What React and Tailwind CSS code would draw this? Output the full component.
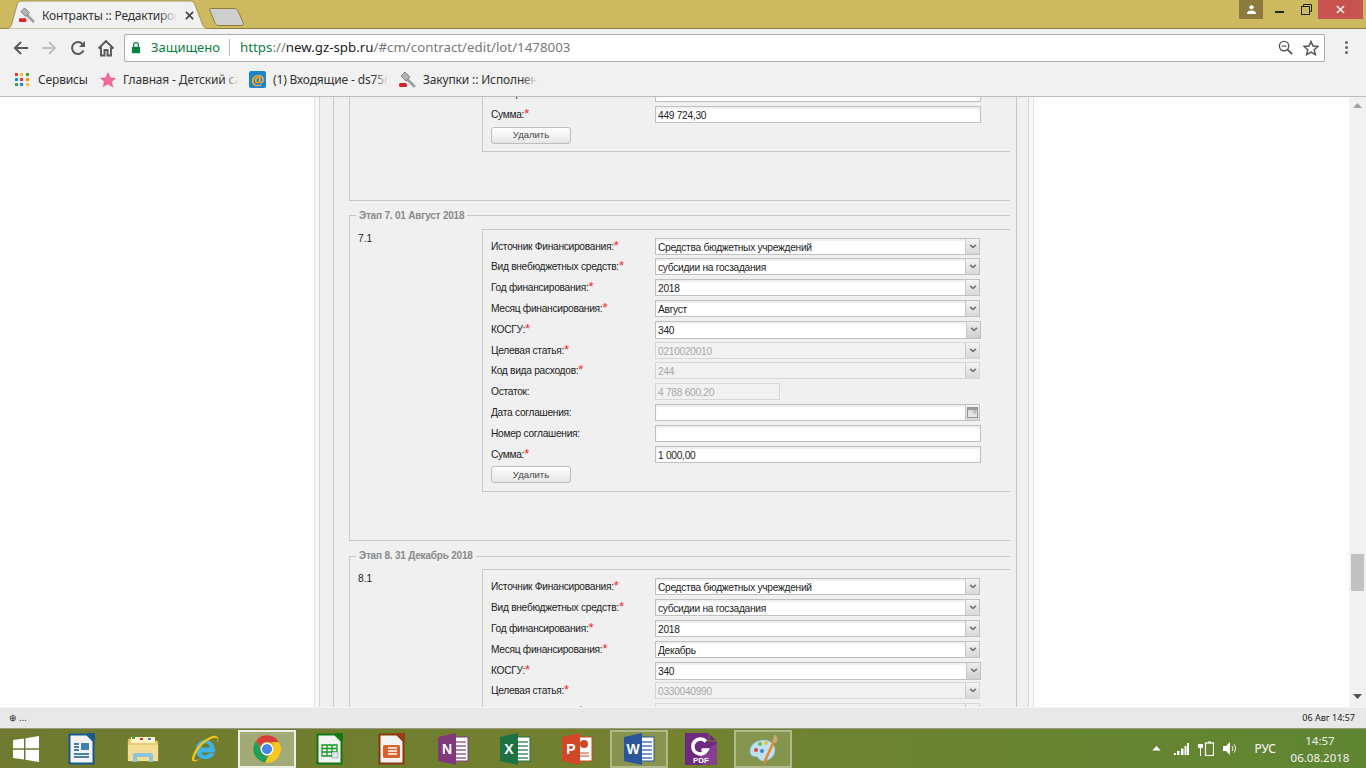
import React from "react";

const UI = { fontFamily: '"Noto Sans", "Open Sans", sans-serif' };

function Gavel({ className }) {
  return (
    <svg viewBox="0 0 18 18" className={className}>
      <path d="M8 7l8 8" stroke="#a0a0a0" strokeWidth="3" strokeLinecap="round" />
      <path d="M3 5l4-4 5 5-4 4z" fill="#b4b4b4" stroke="#707070" strokeWidth="0.8" />
      <rect x="1" y="12" width="8" height="4" rx="1.5" fill="#d8232a" />
    </svg>
  );
}

function Chevron() {
  return (
    <svg viewBox="0 0 9 6" className="w-[8px] h-[5px]">
      <path d="M1 1l3.5 3L8 1" fill="none" stroke="#6f7680" strokeWidth="2" />
    </svg>
  );
}

function Trigger({ dark, children }) {
  return (
    <div className={`flex items-center justify-center h-full border-l border-[#c8c8c8] bg-linear-to-b w-[14px] shrink-0 ${dark ? "from-[#ececec] to-[#cfcfcf]" : "from-[#f4f4f4] to-[#d8d8d8]"}`}>
      {children || <Chevron />}
    </div>
  );
}

function Field({ value, kind = "select", disabled, wide, short }) {
  const width = short ? "w-[125px]" : kind === "text" || wide ? "w-[326px]" : "w-[325px]";
  const height = wide ? "h-[18px]" : "h-[17px]";
  return (
    <div
      className={`flex items-stretch border ${height} ${width} ${disabled ? "border-[#d6d6d6] bg-[#f1f1f1] text-[#a8a8a8]" : "border-[#c0c0c0] bg-white text-[#222] shadow-[inset_0_2px_2px_rgba(0,0,0,0.07)]"}`}
    >
      <div className="flex-1 pl-[2px] leading-[17px] tracking-[-0.28px] overflow-hidden whitespace-nowrap">{value}</div>
      {kind === "select" && <Trigger dark={wide} />}
      {kind === "date" && (
        <Trigger>
          <svg viewBox="0 0 12 12" className="w-[11px] h-[11px]">
            <rect x="0.5" y="0.5" width="11" height="11" fill="#e2e2e2" stroke="#8e8e8e" />
            <rect x="1" y="1" width="10" height="2.5" fill="#9a9a9a" />
            <circle cx="8.5" cy="5.5" r="1.4" fill="#fff" stroke="#777" strokeWidth="0.7" />
          </svg>
        </Trigger>
      )}
    </div>
  );
}

function Row({ label, req, ...f }) {
  return (
    <div className="flex items-start h-[20.8px]">
      <div className="w-[164px] pt-[1px] leading-[16px] tracking-[-0.28px] text-[#222] whitespace-nowrap">
        {label}
        {req && <span className="text-[#f22] text-[13px] leading-[12px]">*</span>}
      </div>
      <Field {...f} />
    </div>
  );
}

function Remove() {
  return (
    <button className="block w-[80px] h-[17px] border border-[#bdbdbd] rounded-[3px] bg-linear-to-b from-[#ffffff] to-[#e6e6e6] text-[9.5px] leading-[14px] text-[#444]">
      Удалить
    </button>
  );
}

function Stage({ title, num, target, month, kbk, last }) {
  return (
    <fieldset className="border border-r-0 border-[#c8c8c8] mb-[9px] pt-[7px] pb-[48px] min-w-0">
      <legend className="ml-[6px] px-[3px] text-[10px] tracking-[-0.2px] leading-[12px] font-bold text-[#8a8a8a]">{title}</legend>
      <div className="flex pl-[8px]">
        <div className="w-[124px] pt-[3px] text-[#222] leading-[13px]">{num}</div>
        <div className="flex-1 border border-r-0 border-[#c8c8c8] pl-[8px] pt-[8px] pb-[8px]">
          <Row label="Источник Финансирования:" req value="Средства бюджетных учреждений" />
          <Row label="Вид внебюджетных средств:" req value="субсидии на госзадания" />
          <Row label="Год финансирования:" req value="2018" />
          <Row label="Месяц финансирования:" req value={month} />
          <Row label="КОСГУ:" req value="340" wide />
          <Row label="Целевая статья:" req value={target} disabled />
          <Row label="Код вида расходов:" req value={kbk} disabled />
          {!last && (
            <>
              <Row label="Остаток:" value="4 788 600,20" kind="none" disabled short />
              <Row label="Дата соглашения:" value="" kind="date" />
              <Row label="Номер соглашения:" value="" kind="text" />
              <Row label="Сумма:" req value="1 000,00" kind="text" />
              <Remove />
            </>
          )}
        </div>
      </div>
    </fieldset>
  );
}

function TitleBar() {
  return (
    <div className="relative h-[29px] shrink-0 bg-[#cdb95f] border-b border-[#8f7f3c] flex">
      <div className="relative w-[211px] h-[29px] shrink-0 flex items-start pt-[7px] pl-[18px]">
        <svg viewBox="0 0 211 29" className="absolute inset-0 w-[211px] h-[29px]">
          <path d="M0 28.5H7C10 28.5 11 26 12 23L17 5C18 2 19 1 22 1H190C193 1 194 2 195 5L202 23C203 26 204 28.5 208 28.500H211V29H0z" fill="#f1f1f1" stroke="#94843f" strokeWidth="0.8" />
        </svg>
        <Gavel className="relative w-[17px] h-[17px] shrink-0" />
        <div className="relative ml-[7px] w-[135px] overflow-hidden whitespace-nowrap text-[12px] tracking-[-0.2px] leading-[18px] text-[#333]" style={UI}>
          Контракты :: Редактирование
          <div className="absolute right-0 top-0 w-[18px] h-full bg-linear-to-r from-transparent to-[#f1f1f1]" />
        </div>
        <svg viewBox="0 0 10 10" className="relative ml-[8px] mt-[4px] w-[9px] h-[9px] shrink-0">
          <path d="M1 1l8 8M9 1l-8 8" stroke="#444" strokeWidth="1.8" />
        </svg>
      </div>
      <svg viewBox="0 0 36 20" className="w-[36px] h-[20px] mt-[7px] -ml-[2px]">
        <path d="M1.500 1.500H25C27 1.500 28 2 29 4L34 15C35 17.500 34 18.500 32 18.500H10C8 18.500 7 18 6 16L1 3.500C0.600 2 0.800 1.500 1.500 1.500z" fill="#cfcfcf" stroke="#8d7e3e" />
      </svg>
      <div className="ml-auto flex items-start pr-[3px]">
        <div className="w-[24px] h-[19px] bg-[#8c7a3f] flex items-center justify-center">
          <svg viewBox="0 0 12 10" className="w-[11px] h-[9px]"><circle cx="6" cy="2.600" r="2.400" fill="#fff" /><path d="M1 10c0-3 2-4 5-4s5 1 5 4z" fill="#fff" /></svg>
        </div>
        <div className="w-[29px] h-[19px] flex items-center justify-center ml-[2px]"><div className="w-[9px] h-[2px] bg-[#222] mt-[4px]" /></div>
        <div className="w-[24px] h-[19px] flex items-center justify-center">
          <svg viewBox="0 0 11 11" className="w-[11px] h-[11px]"><path d="M2.500 2.500V.5h8v7h-2" fill="none" stroke="#222" /><rect x="0.5" y="2.500" width="8" height="8" fill="none" stroke="#222" strokeWidth="1" /></svg>
        </div>
        <div className="w-[45px] h-[19px] bg-[#c85250] flex items-center justify-center">
          <svg viewBox="0 0 10 10" className="w-[9px] h-[9px]"><path d="M1 1l8 8M9 1l-8 8" stroke="#fff" strokeWidth="1.500" /></svg>
        </div>
      </div>
    </div>
  );
}

function Toolbar() {
  return (
    <div className="h-[33px] shrink-0 bg-[#f1f1f1] flex items-center pt-[4px]" style={UI}>
      <div className="w-[124px] flex items-center shrink-0 pl-[13px] gap-[12px]">
        <svg viewBox="0 0 16 16" className="w-[16px] h-[16px]"><path d="M15 8H2M8 2L2 8l6 6" fill="none" stroke="#5a5a5a" strokeWidth="2" /></svg>
        <svg viewBox="0 0 16 16" className="w-[16px] h-[16px]"><path d="M1 8h13M8 2l6 6-6 6" fill="none" stroke="#c0c0c0" strokeWidth="2" /></svg>
        <svg viewBox="0 0 16 16" className="w-[16px] h-[16px] translate-x-[1px]"><path d="M13.500 10.500A6 6 0 1 1 12.500 4" fill="none" stroke="#5a5a5a" strokeWidth="2" /><path d="M15 1v6H9z" fill="#5a5a5a" /></svg>
        <svg viewBox="0 0 18 18" className="w-[18px] h-[18px]"><path d="M1.500 9.500L9 2l7.500 7.500M4 8v8.500h3.500V11h3v5.500H14V8" fill="none" stroke="#5a5a5a" strokeWidth="1.900" /></svg>
      </div>
      <div className="w-[1201px] h-[28px] bg-white border border-[#aaaaaa] rounded-[2px] flex items-center pl-[6px] pr-[5px]">
        <svg viewBox="0 0 12 14" className="w-[10px] h-[13px] shrink-0"><rect x="1" y="6" width="10" height="8" rx="1" fill="#0b8043" /><path d="M3.200 6V4a2.800 2.800 0 0 1 5.600 0v2" fill="none" stroke="#0b8043" strokeWidth="1.500" /></svg>
        <span className="ml-[10px] text-[13px] text-[#0b8043]">Защищено</span>
        <div className="ml-[9px] w-px h-[17px] bg-[#bdbdbd]" />
        <span className="ml-[10px] text-[13.3px] leading-[20px] -mt-[2px] text-[#777] whitespace-nowrap">
          <span className="text-[#0b8043]">https</span>://<span className="text-[#222]">new.gz-spb.ru</span>/#cm/contract/edit/lot/1478003
        </span>
        <svg viewBox="0 0 16 16" className="ml-auto w-[15px] h-[15px]"><circle cx="6.500" cy="6.500" r="5" fill="none" stroke="#555" strokeWidth="1.500" /><path d="M4 6.500h5" stroke="#555" strokeWidth="1.300" /><path d="M10 10l5 5" stroke="#555" strokeWidth="1.800" /></svg>
        <svg viewBox="0 0 16 16" className="ml-[10px] w-[16px] h-[16px]"><path d="M8 1.500l2 4.600 4.900.4-3.700 3.300 1.100 4.800L8 12.100l-4.300 2.500 1.100-4.800L1.100 6.500l4.900-.4z" fill="none" stroke="#555" strokeWidth="1.500" /></svg>
      </div>
      <div className="w-[41px] flex flex-col items-center gap-[2px] pl-[1px]">
        <div className="w-[3px] h-[3px] rounded-full bg-[#666]" />
        <div className="w-[3px] h-[3px] rounded-full bg-[#666]" />
        <div className="w-[3px] h-[3px] rounded-full bg-[#666]" />
      </div>
    </div>
  );
}

function Fade({ w, text }) {
  return (
    <div className={`relative ${w} overflow-hidden whitespace-nowrap text-[12px] tracking-[-0.15px] leading-[18px] text-[#333]`}>
      {text}
      <div className="absolute right-0 top-0 w-[14px] h-full bg-linear-to-r from-transparent to-[#f1f1f1]" />
    </div>
  );
}

function Bookmarks() {
  const dots = ["#e53935", "#fbc02d", "#43a047", "#1e88e5", "#e53935", "#fb8c00", "#43a047", "#1e88e5", "#fbc02d"];
  return (
    <div className="h-[35px] shrink-0 bg-[#f1f1f1] border-b border-[#bcbcbc] flex items-center pl-[15px] pt-[1px]" style={UI}>
      <div className="grid grid-cols-3 gap-[2px] w-[14px] shrink-0">
        {dots.map((c, i) => (
          <div key={i} className="w-[3px] h-[3px]" style={{ background: c }} />
        ))}
      </div>
      <span className="ml-[9px] text-[12px] tracking-[-0.15px] text-[#333] w-[48px] whitespace-nowrap">Сервисы</span>
      <svg viewBox="0 0 16 16" className="ml-[14px] w-[16px] h-[16px] shrink-0"><path d="M8 .8l2.300 5 5.200.5-3.900 3.500 1.200 5.300L8 12l-4.800 2.600 1.200-5.300L.5 6.300l5.200-.5z" fill="#f06a9a" stroke="#e24a80" strokeWidth="0.5" /></svg>
      <div className="ml-[7px]"><Fade w="w-[115px]" text="Главная - Детский сад" /></div>
      <div className="ml-[11px] w-[17px] h-[17px] rounded-[2px] bg-[#1a84d0] flex items-center justify-center text-[15px] leading-none font-bold text-[#f7a81c] shrink-0">@</div>
      <div className="ml-[7px]"><Fade w="w-[115px]" text="(1) Входящие - ds75n" /></div>
      <Gavel className="ml-[10px] w-[18px] h-[18px] shrink-0" />
      <div className="ml-[7px]"><Fade w="w-[114px]" text="Закупки :: Исполнение" /></div>
    </div>
  );
}

function Scrollbar() {
  return (
    <div className="w-[17px] shrink-0 bg-[#f1f1f1] flex flex-col items-center">
      <svg viewBox="0 0 9 5" className="w-[9px] h-[5px] mt-[6px]"><path d="M0 5l4.500-5L9 5z" fill="#a3a3a3" /></svg>
      <div className="flex-1 w-full px-[2px] pt-[446px]"><div className="h-[37px] bg-[#c1c1c1]" /></div>
      <svg viewBox="0 0 9 5" className="w-[9px] h-[5px] mb-[8px]"><path d="M0 0l4.500 5L9 0z" fill="#505050" /></svg>
    </div>
  );
}

function Content() {
  return (
    <div className="flex-1 min-h-0 flex bg-white overflow-hidden">
      <div className="flex-1 overflow-hidden pl-[314px]">
        <div className="w-[720px] min-h-full border-x border-[#e4e4e4] pl-[4px] pr-[4px] bg-[#f7f7f7]">
          <div className="border-x border-[#d4d4d4] bg-[#f0f0f0] pl-[13px] pr-[11px]">
            <div
              className="border-x border-[#c8c8c8] pl-[15px] pr-[6px] text-[10.2px]"
              style={{ fontFamily: '"Liberation Sans", sans-serif' }}
            >
              <div className="-mt-[12px] border-b border-l border-[#c8c8c8] pb-[48px] pl-[132px] mb-[9px]">
                <div className="border-b border-l border-[#c8c8c8] pl-[8px] pb-[7px]">
                  <Row label="Номер соглашения:" kind="text" value="" />
                  <Row label="Сумма:" req kind="text" value="449 724,30" />
                  <Remove />
                </div>
              </div>
              <Stage title="Этап 7. 01 Август 2018" num="7.1" month="Август" target="0210020010" kbk="244" />
              <Stage title="Этап 8. 31 Декабрь 2018" num="8.1" month="Декабрь" target="0330040990" kbk="" last />
            </div>
          </div>
        </div>
      </div>
      <Scrollbar />
    </div>
  );
}

function StatusBar() {
  return (
    <div className="h-[21px] shrink-0 bg-[#e8e8e8] border-t border-[#f4f4f4] flex items-center justify-between pl-[9px] pr-[11px] text-[9px] text-[#222]" style={{ fontFamily: '"Noto Sans", sans-serif' }}>
      <span>⊕ ...</span>
      <span>06 Авг 14:57</span>
    </div>
  );
}

function Doc({ color, corner, children }) {
  return (
    <svg viewBox="0 0 27 32" className="w-[27px] h-[32px]">
      <path d="M1.500 1.500H19L25.500 8V30.500H1.500z" fill="#f3f3f3" stroke={color} strokeWidth="2" />
      <path d="M19 0h8v8z" fill={corner} />
      {children}
    </svg>
  );
}

function Office({ color, letter, lines }) {
  return (
    <svg viewBox="0 0 31 32" className="w-[31px] h-[32px]">
      <rect x="14" y="4" width="16" height="24" fill="#fff" stroke={color} />
      {lines.map((y) => (
        <path key={y} d={`M17 ${y}h11`} stroke={color} strokeWidth="1.200" />
      ))}
      <path d="M0 4L18 0V32L0 28z" fill={color} />
      <text x="9" y="21" textAnchor="middle" fontSize="14" fontWeight="700" fill="#fff" fontFamily="Liberation Sans, sans-serif">{letter}</text>
    </svg>
  );
}

function Cell({ active, children }) {
  const tone = active === "strong" ? "bg-white/35 border-white/80" : active ? "bg-white/15 border-white/35" : "border-transparent";
  return (
    <div className="w-[62px] h-[40px] shrink-0 px-[2px] py-[1px]">
      <div className={`w-[58px] h-[38px] border-2 flex items-center justify-center ${tone}`}>{children}</div>
    </div>
  );
}

function Taskbar() {
  const l = [9, 13, 17, 21, 25];
  return (
    <div className="h-[40px] shrink-0 flex items-center text-white border-t border-[#9a9a84] bg-linear-to-r from-[#6f7a30] via-[#72822f] to-[#5f8633]" style={UI}>
      <div className="w-[50px] shrink-0 flex justify-center pl-[1px]">
        <svg viewBox="0 0 26 26" className="w-[26px] h-[26px]"><path d="M0 4l11-1.600V12.300H0zM12.500 2.200L26 0V12.300H12.500zM0 13.700h11V23.600L0 22zM12.500 13.700H26V26L12.500 23.800z" fill="#fff" /></svg>
      </div>
      <Cell>
        <Doc color="#14598f" corner="#14598f">
          <path d="M6 11h5M6 14h5M6 17h5M6 21h15M6 24h15" stroke="#14598f" strokeWidth="1.500" />
          <rect x="13" y="10" width="8" height="7" fill="#3d7fb3" />
        </Doc>
      </Cell>
      <Cell>
        <svg viewBox="0 0 32 28" className="w-[32px] h-[28px]">
          <path d="M1 4h10l2 2h18v20H1z" fill="#e9cc77" stroke="#c4a450" strokeWidth="0.600" />
          <rect x="4" y="2" width="24" height="6" fill="#fff3c4" />
          <rect x="5" y="2" width="3" height="2" fill="#3aa24a" /><rect x="13" y="3" width="3" height="2" fill="#c93a32" /><rect x="21" y="3" width="3" height="2" fill="#3a7fd0" />
          <path d="M1 10h30v16H1z" fill="#f3dc94" />
          <path d="M6 27V20a2 2 0 0 1 2-2h16a2 2 0 0 1 2 2v7h-4v-5H10v5z" fill="#8cc4dc" />
        </svg>
      </Cell>
      <Cell>
        <svg viewBox="0 0 32 32" className="w-[31px] h-[31px]">
          <path d="M16 7a10 10 0 0 0-10 10c0 6 4 10 10 10 4.500 0 8-2 9.500-6h-6a4.500 4.500 0 0 1-8-1H26c.5-7-4-13-10-13zm-4.600 8a4.500 4.500 0 0 1 9 0z" fill="#3fb3e6" />
          <path d="M27 3c-6-1-18 7-23 17-2 5-3 8-1 9 2 .8 5-1 7-2-2 .5-5 1.500-5.500.5C4 25 7 18 13 12 19 7 25 3.500 28 5.500c1 .8.500 3-.5 5 2-2.500 3-6-.5-7.500z" fill="#f0c419" />
        </svg>
      </Cell>
      <Cell active="strong">
        <svg viewBox="0 0 24 24" className="w-[30px] h-[30px]">
          <circle cx="12" cy="12" r="11" fill="#e0a91f" />
          <path d="M12 1a11 11 0 0 1 9.530 5.500H12a5.500 5.500 0 0 0-5.300 4L3.300 5.300A11 11 0 0 1 12 1z" fill="#d7403a" />
          <path d="M3.300 5.300l5 8.700a4.300 4.300 0 0 0 4.500 3.300L10.400 22.900A11 11 0 0 1 3.300 5.300z" fill="#22a05a" />
          <path d="M21.530 6.500A11 11 0 0 1 10.400 22.900l5.400-8.900A5 5 0 0 0 16 6.500z" fill="#f6c91c" />
          <circle cx="12" cy="12" r="5.200" fill="#fff" />
          <circle cx="12" cy="12" r="4.100" fill="#4a86e8" />
        </svg>
      </Cell>
      <Cell>
        <Doc color="#0f7a14" corner="#0f7a14">
          <path d="M6 12h15v11H6zM6 15.500h15M6 19h15M11 12v11M16 12v11" fill="none" stroke="#159a22" strokeWidth="1.300" />
          <rect x="16" y="19" width="6" height="6" fill="#dfe6ee" stroke="#77838f" strokeWidth="0.500" />
        </Doc>
      </Cell>
      <Cell>
        <Doc color="#8f3510" corner="#a23a10">
          <rect x="5" y="12" width="17" height="13" rx="1.500" fill="#d7622e" />
          <path d="M10 15h9M10 18h9M10 21h9" stroke="#fff" strokeWidth="1.300" />
        </Doc>
      </Cell>
      <Cell><Office color="#80397b" letter="N" lines={l} /></Cell>
      <Cell><Office color="#1e7145" letter="X" lines={l} /></Cell>
      <Cell>
        <svg viewBox="0 0 31 32" className="w-[31px] h-[32px]">
          <rect x="14" y="4" width="16" height="24" fill="#fff" stroke="#d24726" />
          <circle cx="22" cy="11" r="4" fill="#d24726" />
          <path d="M18 20h9M18 23h9" stroke="#d24726" />
          <path d="M0 4L18 0V32L0 28z" fill="#d24726" />
          <text x="9" y="21" textAnchor="middle" fontSize="14" fontWeight="700" fill="#fff" fontFamily="Liberation Sans, sans-serif">P</text>
        </svg>
      </Cell>
      <Cell active><Office color="#2b579a" letter="W" lines={l} /></Cell>
      <Cell>
        <svg viewBox="0 0 32 32" className="w-[32px] h-[32px]">
          <path d="M0 0H23.500V8.500H32V32H0z" fill="#6e2a7e" />
          <path d="M24.500 1L31 7.500H24.500z" fill="#6e2a7e" />
          <path d="M14 22L32 10V32H18z" fill="#84408f" />
          <path d="M21 8.500A7.500 7.500 0 1 0 22 17H16.500" fill="none" stroke="#fff" strokeWidth="3.500" />
          <text x="16" y="30" textAnchor="middle" fontSize="8" fontWeight="700" fill="#fff" fontFamily="Liberation Sans, sans-serif">PDF</text>
        </svg>
      </Cell>
      <Cell active>
        <svg viewBox="0 0 30 32" className="w-[30px] h-[32px]">
          <path d="M2 18c0-7 7-11 14-11 6 0 11 4 11 10s-5 11-12 11c-4 0-4-3-6-4-3-1-7 0-7-6z" fill="#bfe0f0" stroke="#7fb2cc" strokeWidth="0.600" />
          <circle cx="8" cy="17" r="2" fill="#e04b3a" /><circle cx="12" cy="11" r="2" fill="#6fbf4a" /><circle cx="18" cy="10" r="2" fill="#f0c030" /><circle cx="14" cy="18" r="2" fill="#3b8ac4" />
          <path d="M16 30L26 8" stroke="#e8862a" strokeWidth="2.500" />
          <path d="M24 8l3-7 3 5-2 4z" fill="#c9a77a" />
        </svg>
      </Cell>
      <div className="ml-auto flex items-center pr-[19px]">
        <svg viewBox="0 0 10 6" className="w-[9px] h-[5px]"><path d="M5 0l5 5.500H0z" fill="#fff" /></svg>
        <svg viewBox="0 0 15 12" className="ml-[13px] w-[15px] h-[12px]"><path d="M0 10h2v2H0zM3 8h2.500v4H3zM7 5.500h2.500V12H7zM10.500 3h2v9h-2zM13 0h2v12h-2z" fill="#fff" /></svg>
        <svg viewBox="0 0 16 15" className="ml-[9px] w-[16px] h-[15px]"><path d="M1 0v3M4 0v3M0 3h5v4H3v8H2V7H0z" fill="#fff" /><rect x="7.500" y="2" width="8" height="12.500" fill="none" stroke="#fff" strokeWidth="1.200" /><rect x="10" y="0.500" width="3" height="1.500" fill="#fff" /></svg>
        <svg viewBox="0 0 14 13" className="ml-[9px] w-[14px] h-[13px]"><path d="M0 4h3l4-4v13L3 9H0z" fill="#fff" /><path d="M9 4c1 1 1 4 0 5M11 2.500c2 2 2 6 0 8" stroke="#fff" fill="none" /></svg>
        <span className="ml-[17px] text-[12px]">РУС</span>
        <div className="ml-[17px] w-[54px] flex flex-col items-center text-[11.5px] leading-[17px] text-[#f2f2f2]">
          <span>14:57</span>
          <span className="whitespace-nowrap">06.08.2018</span>
        </div>
      </div>
    </div>
  );
}

export default function App() {
  return (
    <div className="w-[1366px] h-[768px] flex flex-col overflow-hidden" style={{ fontFamily: '"Noto Sans", sans-serif' }}>
      <TitleBar />
      <Toolbar />
      <Bookmarks />
      <Content />
      <StatusBar />
      <Taskbar />
    </div>
  );
}
